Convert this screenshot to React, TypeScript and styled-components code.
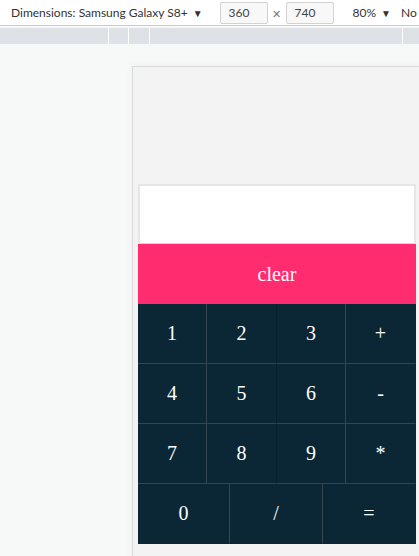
import React from "react";
import styled, { createGlobalStyle } from "styled-components";

const Global = createGlobalStyle`
  html, body { margin: 0; padding: 0; }
  body {
    background: #f7f8f8;
    overflow: hidden;
    font-family: "Noto Sans", "Open Sans", sans-serif;
  }
`;

const Page = styled.div`
  width: 419px;
  height: 556px;
  display: flex;
  flex-direction: column;
  overflow: hidden;
`;

const Toolbar = styled.div`
  height: 26px;
  flex: none;
  background: #ffffff;
  border-bottom: 1px solid #cbcdd1;
  display: flex;
  align-items: center;
  padding-left: 11px;
  font-family: Lato, "Noto Sans", sans-serif;
  font-size: 12px;
  color: #333;
  white-space: nowrap;
  box-sizing: border-box;
  overflow: hidden;
`;

const Label = styled.span<{ $ml?: number }>`
  flex: none;
  margin-left: ${(p) => p.$ml ?? 0}px;
`;

const Arrow = styled.span`
  font-size: 10px;
  margin-left: 5px;
`;

const SizeInput = styled.span<{ $ml: number }>`
  flex: none;
  margin-left: ${(p) => p.$ml}px;
  width: 48px;
  height: 22px;
  box-sizing: border-box;
  border: 1px solid #d2d2d2;
  background: #f8f8f8;
  border-radius: 2px;
  display: flex;
  align-items: center;
  padding-left: 8px;
  color: #444;
`;

const Times = styled.span`
  flex: none;
  width: 18px;
  text-align: center;
  color: #777;
  font-size: 11px;
  padding-top: 3px;
`;

const Ruler = styled.div`
  margin-top: 2px;
  height: 16px;
  flex: none;
  display: flex;
  gap: 1px;
  background: #ffffff;
`;

const RulerSeg = styled.div<{ $w?: number }>`
  background: #dee1e6;
  ${(p) => (p.$w ? `width: ${p.$w}px; flex: none;` : "flex: 1;")}
`;

const Canvas = styled.div`
  flex: 1;
  padding: 22px 0 0 132px;
  background: #f7f8f8;
`;

const Device = styled.div`
  width: 288px;
  height: 600px;
  box-sizing: border-box;
  border: 1px solid #dadada;
  background: #f3f3f3;
  box-shadow: 0 0 8px rgba(0, 0, 0, 0.05);
  padding: 117px 0 0 5px;
`;

const Calc = styled.div`
  width: 278px;
  display: flex;
  flex-direction: column;
  font-family: "Liberation Serif", "Times New Roman", serif;
  font-size: 20px;
  color: #ffffff;
`;

const Display = styled.div`
  height: 60px;
  box-sizing: border-box;
  background: #ffffff;
  border: 2px solid #e6e6e6;
  border-bottom: 1px solid #d6d6d6;
`;

const Clear = styled.div`
  height: 60px;
  background: #ff2d6f;
  display: flex;
  align-items: center;
  justify-content: center;
`;

const Row = styled.div<{ $cols: string }>`
  display: grid;
  grid-template-columns: ${(p) => p.$cols};
  height: 60px;
  background: #0b2634;
`;

const Key = styled.div<{ $right?: string; $bottom?: boolean }>`
  display: flex;
  align-items: center;
  justify-content: center;
  box-sizing: border-box;
  border-right: 1px solid ${(p) => p.$right ?? "transparent"};
  border-bottom: 1px solid ${(p) => (p.$bottom ? "#34454f" : "transparent")};
`;

const LINE = "#34454f";
const FAINT = "#08202c";

const rows = [
  ["1", "2", "3", "+"],
  ["4", "5", "6", "-"],
  ["7", "8", "9", "*"],
];

export default function App() {
  return (
    <Page>
      <Global />
      <Toolbar>
        <Label>
          Dimensions: Samsung Galaxy S8+<Arrow>▼</Arrow>
        </Label>
        <SizeInput $ml={17}>360</SizeInput>
        <Times>✕</Times>
        <SizeInput $ml={0}>740</SizeInput>
        <Label $ml={19}>
          80%<Arrow>▼</Arrow>
        </Label>
        <Label $ml={10}>No throttling</Label>
      </Toolbar>
      <Ruler>
        <RulerSeg $w={108} />
        <RulerSeg $w={19} />
        <RulerSeg $w={20} />
        <RulerSeg $w={252} />
        <RulerSeg />
      </Ruler>
      <Canvas>
        <Device>
          <Calc>
            <Display />
            <Clear>clear</Clear>
            {rows.map((r) => (
              <Row key={r[0]} $cols="69px 70px 69px 70px">
                {r.map((k, i) => (
                  <Key
                    key={k}
                    $bottom
                    $right={i === 0 || i === 2 ? LINE : i === 1 ? FAINT : undefined}
                  >
                    {k}
                  </Key>
                ))}
              </Row>
            ))}
            <Row $cols="92px 93px 93px">
              <Key $right={LINE}>0</Key>
              <Key $right={LINE}>/</Key>
              <Key>=</Key>
            </Row>
          </Calc>
        </Device>
      </Canvas>
    </Page>
  );
}
